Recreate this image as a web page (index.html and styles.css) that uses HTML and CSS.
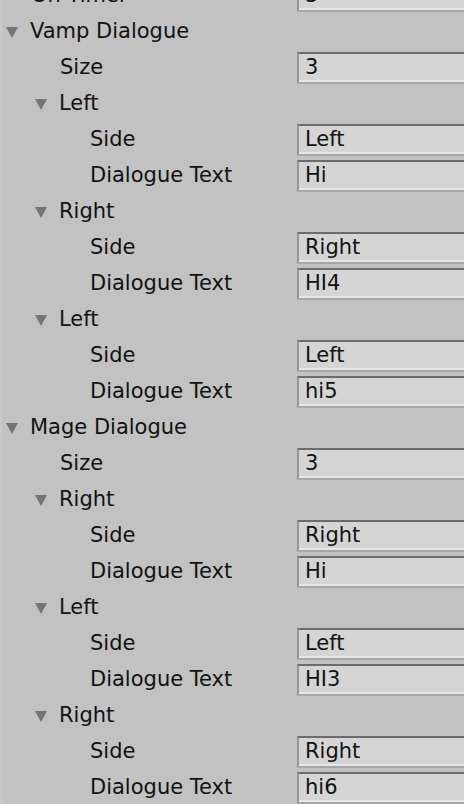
FILE: index.html
```html
<!DOCTYPE html>
<html>
<head>
<meta charset="utf-8">
<link rel="stylesheet" href="styles.css">
</head>
<body>
<div class="inspector">
  <div class="row"><div class="label lvl0">On Timer</div><div class="field">3</div></div>

  <div class="row"><div class="label lvl0"><span class="arrow"></span>Vamp Dialogue</div></div>
  <div class="row"><div class="label lvl1">Size</div><div class="field">3</div></div>
  <div class="row"><div class="label lvl1"><span class="arrow"></span>Left</div></div>
  <div class="row"><div class="label lvl2">Side</div><div class="field">Left</div></div>
  <div class="row"><div class="label lvl2">Dialogue Text</div><div class="field">Hi</div></div>
  <div class="row"><div class="label lvl1"><span class="arrow"></span>Right</div></div>
  <div class="row"><div class="label lvl2">Side</div><div class="field">Right</div></div>
  <div class="row"><div class="label lvl2">Dialogue Text</div><div class="field">HI4</div></div>
  <div class="row"><div class="label lvl1"><span class="arrow"></span>Left</div></div>
  <div class="row"><div class="label lvl2">Side</div><div class="field">Left</div></div>
  <div class="row"><div class="label lvl2">Dialogue Text</div><div class="field">hi5</div></div>

  <div class="row"><div class="label lvl0"><span class="arrow"></span>Mage Dialogue</div></div>
  <div class="row"><div class="label lvl1">Size</div><div class="field">3</div></div>
  <div class="row"><div class="label lvl1"><span class="arrow"></span>Right</div></div>
  <div class="row"><div class="label lvl2">Side</div><div class="field">Right</div></div>
  <div class="row"><div class="label lvl2">Dialogue Text</div><div class="field">Hi</div></div>
  <div class="row"><div class="label lvl1"><span class="arrow"></span>Left</div></div>
  <div class="row"><div class="label lvl2">Side</div><div class="field">Left</div></div>
  <div class="row"><div class="label lvl2">Dialogue Text</div><div class="field">HI3</div></div>
  <div class="row"><div class="label lvl1"><span class="arrow"></span>Right</div></div>
  <div class="row"><div class="label lvl2">Side</div><div class="field">Right</div></div>
  <div class="row"><div class="label lvl2">Dialogue Text</div><div class="field">hi6</div></div>
</div>
</body>
</html>
```
FILE: styles.css
```css
html, body {
  margin: 0;
  padding: 0;
  background: #c2c2c2;
  overflow: hidden;
}

.inspector {
  margin-top: -23px;
  border-left: 2px solid #c9c9c9;
  font-family: "DejaVu Sans", "Liberation Sans", sans-serif;
  font-size: 21px;
  color: #111;
}

.row {
  display: flex;
  height: 36px;
  align-items: flex-start;
}

.label {
  width: 295px;
  flex: none;
  box-sizing: border-box;
  line-height: 36px;
  white-space: nowrap;
  display: flex;
  align-items: center;
}

.lvl0 { padding-left: 29px; }
.lvl1 { padding-left: 58px; }
.lvl2 { padding-left: 88px; }

.arrow {
  flex: none;
  width: 0;
  height: 0;
  border-left: 6.5px solid transparent;
  border-right: 6.5px solid transparent;
  border-top: 11px solid #747474;
  margin-left: -25px;
  margin-right: 12px;
  margin-top: 3px;
}

.field {
  flex: 1;
  margin-top: 3px;
  height: 32px;
  box-sizing: border-box;
  background: #d5d5d5;
  border-top: 2px solid #6b6b6b;
  border-left: 2px solid #979797;
  border-bottom: 2px solid #a6a6a6;
  box-shadow: inset 0 -2px 0 #e6e6e6;
  padding-left: 6px;
  line-height: 27px;
  white-space: nowrap;
  color: #111;
}
```
